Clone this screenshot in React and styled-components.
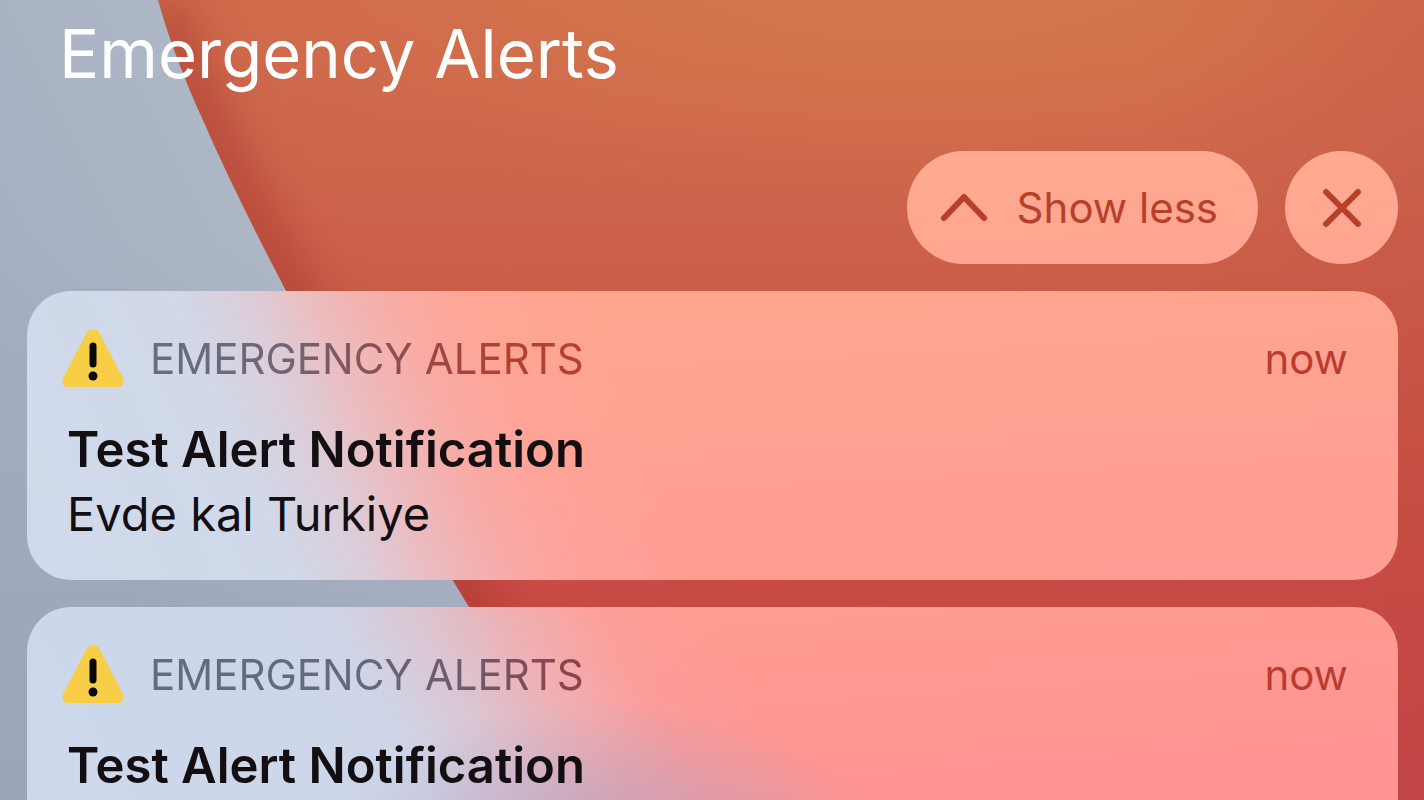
import React from "react";
import styled, { createGlobalStyle } from "styled-components";

const GlobalStyle = createGlobalStyle`
  *, *::before, *::after { box-sizing: border-box; }
  body {
    margin: 0;
    font-family: Inter, "Liberation Sans", sans-serif;
    background: #c84c44;
  }
`;

const Screen = styled.main`
  position: relative;
  isolation: isolate;
  height: 100vh;
  overflow: hidden;
  padding: 12px 26px 0 27px;
`;

const WallpaperArt = styled.svg`
  position: absolute;
  inset: 0;
  z-index: -1;
  width: 100%;
  height: 100%;
`;

const Title = styled.h1`
  margin: 0;
  padding-left: 32px;
  font-size: 67px;
  font-weight: 400;
  line-height: 84px;
  color: #fff;
`;

const Toolbar = styled.div`
  display: flex;
  justify-content: flex-end;
  gap: 27px;
  margin: 55px 0 27px;
`;

const PillButton = styled.button`
  display: flex;
  align-items: center;
  justify-content: center;
  gap: 29px;
  height: 113px;
  padding: ${(p) => (p.$round ? "0" : "0 40px 0 33px")};
  width: ${(p) => (p.$round ? "113px" : "auto")};
  border: 0;
  border-radius: 57px;
  background: linear-gradient(175deg, #ffab90, #ffa492);
  color: #b8402b;
  font: inherit;
  font-size: 42px;
  line-height: 48px;
  cursor: pointer;
`;

const List = styled.div`
  display: flex;
  flex-direction: column;
  gap: 27px;
`;

const Card = styled.article`
  min-height: 289px;
  padding: 36px 50px 34px 34px;
  border-radius: 44px;
  background: ${(p) => p.$tint};
`;

const CardHeader = styled.header`
  display: flex;
  align-items: center;
  height: 64px;
`;

const AppName = styled.span`
  margin-left: 25px;
  font-size: 42px;
  line-height: 64px;
  color: transparent;
  background: ${(p) => p.$ink};
  background-clip: text;
`;

const Time = styled.time`
  margin-left: auto;
  font-size: 42px;
  line-height: 64px;
  color: #b93c2f;
`;

const Heading = styled.h2`
  margin: 27px 0 0;
  padding-left: 6px;
  font-size: 49px;
  font-weight: 600;
  line-height: 64px;
  color: #120e12;
`;

const Message = styled.p`
  margin: 0;
  padding-left: 6px;
  font-size: 47px;
  line-height: 64px;
  color: #120e12;
`;

const EDGE = "M158 0C166 29 181 72 202 118C228 178 257 235 286 291C336 387 398 491 469 607C508 674 550 738 588 800";

function Wallpaper() {
  return (
    <WallpaperArt viewBox="0 0 1424 800" preserveAspectRatio="xMinYMin slice" aria-hidden="true">
      <defs>
        <linearGradient id="red" x1="0" y1="0" x2="0" y2="1">
          <stop offset="0" stopColor="#d06c4b" />
          <stop offset="0.2" stopColor="#ce664b" />
          <stop offset="0.4" stopColor="#ca5b47" />
          <stop offset="0.75" stopColor="#c84a44" />
          <stop offset="1" stopColor="#c24646" />
        </linearGradient>
        <radialGradient id="glow" gradientUnits="userSpaceOnUse" cx="0" cy="0" r="1" gradientTransform="translate(920 -30) scale(820 250)">
          <stop offset="0" stopColor="#d37a4b" />
          <stop offset="0.5" stopColor="#d2744c" stopOpacity="0.7" />
          <stop offset="1" stopColor="#d0684c" stopOpacity="0" />
        </radialGradient>
        <linearGradient id="side" x1="0" y1="0" x2="1" y2="0">
          <stop offset="0.8" stopColor="#b84440" stopOpacity="0" />
          <stop offset="1" stopColor="#b84440" stopOpacity="0.18" />
        </linearGradient>
        <linearGradient id="grey" gradientUnits="userSpaceOnUse" x1="0" y1="330" x2="260" y2="200">
          <stop offset="0" stopColor="#a4aec1" />
          <stop offset="1" stopColor="#adb7c6" />
        </linearGradient>
        <linearGradient id="dusk" x1="0" y1="0" x2="0" y2="1">
          <stop offset="0.3" stopColor="#96a0b6" stopOpacity="0" />
          <stop offset="1" stopColor="#96a0b6" stopOpacity="0.6" />
        </linearGradient>
        <filter id="soft" x="-20%" y="-20%" width="140%" height="140%" colorInterpolationFilters="sRGB">
          <feGaussianBlur stdDeviation="24" />
        </filter>
      </defs>
      <rect width="1424" height="800" fill="url(#red)" />
      <rect width="1424" height="800" fill="url(#glow)" />
      <rect width="1424" height="800" fill="url(#side)" />
      <path d={EDGE} fill="none" stroke="#a83830" strokeOpacity="0.7" strokeWidth="44" filter="url(#soft)" />
      <path d={`${EDGE}H0V0Z`} fill="url(#grey)" />
      <path d={`${EDGE}H0V0Z`} fill="url(#dusk)" />
    </WallpaperArt>
  );
}

const ChevronUp = () => (
  <svg width="48" height="30" viewBox="0 0 48 30" fill="none" stroke="currentColor" strokeWidth="6" strokeLinecap="round" strokeLinejoin="round" aria-hidden="true">
    <path d="M4 25L24 4L44 25" />
  </svg>
);

const Cross = () => (
  <svg width="40" height="40" viewBox="0 0 40 40" fill="none" stroke="currentColor" strokeWidth="6" strokeLinecap="round" aria-hidden="true">
    <path d="M4 4L36 36M36 4L4 36" />
  </svg>
);

const WarningSign = () => (
  <svg width="64" height="60" viewBox="0 0 64 60" aria-hidden="true">
    <path d="M25.500 4C28 -1 36 -1 38.500 4L61.500 48C64 53 62 58 57 58H7C2 58 0 53 2.500 48Z" fill="#f7ce46" />
    <path d="M32 17V35" stroke="#0a0805" strokeWidth="7" strokeLinecap="round" />
    <circle cx="32" cy="47" r="4.500" fill="#0a0805" />
  </svg>
);

const alerts = [
  {
    id: 1,
    message: "Evde kal Turkiye",
    tint: `linear-gradient(66deg, #cfdaec 0, #d1d9e9 240px, #d9d0deee 315px, #e8c1c8cc 380px, #f4b0b199 450px, #fda8a34d 520px, #ffa49200 620px),
      linear-gradient(177deg, #ffa590 15%, #ff9c93 95%)`,
    ink: "linear-gradient(90deg, #666e80 0, #6e6576 130px, #8f4c50 250px, #b4402f 360px)",
  },
  {
    id: 2,
    tint: `radial-gradient(280px 150px at 580px 245px, #ac94bca6, #b49cbc66 50%, #c098b400),
      linear-gradient(60deg, #cdd9ec 0, #ced5e8 400px, #d8c9d8e6 480px, #e9b7c0b3 560px, #f8a2a659 640px, #ff9b9700 730px),
      linear-gradient(176deg, #ff9e91 10%, #ff9492 65%)`,
    ink: "linear-gradient(90deg, #626b80 0, #636a7e 200px, #70586c 320px, #933f46 436px)",
  },
];

function AlertCard({ alert }) {
  return (
    <Card $tint={alert.tint}>
      <CardHeader>
        <WarningSign />
        <AppName $ink={alert.ink}>EMERGENCY ALERTS</AppName>
        <Time>now</Time>
      </CardHeader>
      <Heading>Test Alert Notification</Heading>
      {alert.message && <Message>{alert.message}</Message>}
    </Card>
  );
}

export default function App() {
  return (
    <>
      <GlobalStyle />
      <Screen>
        <Wallpaper />
        <Title>Emergency Alerts</Title>
        <Toolbar>
          <PillButton type="button">
            <ChevronUp />
            Show less
          </PillButton>
          <PillButton type="button" $round aria-label="Close">
            <Cross />
          </PillButton>
        </Toolbar>
        <List>
          {alerts.map((alert) => (
            <AlertCard key={alert.id} alert={alert} />
          ))}
        </List>
      </Screen>
    </>
  );
}
